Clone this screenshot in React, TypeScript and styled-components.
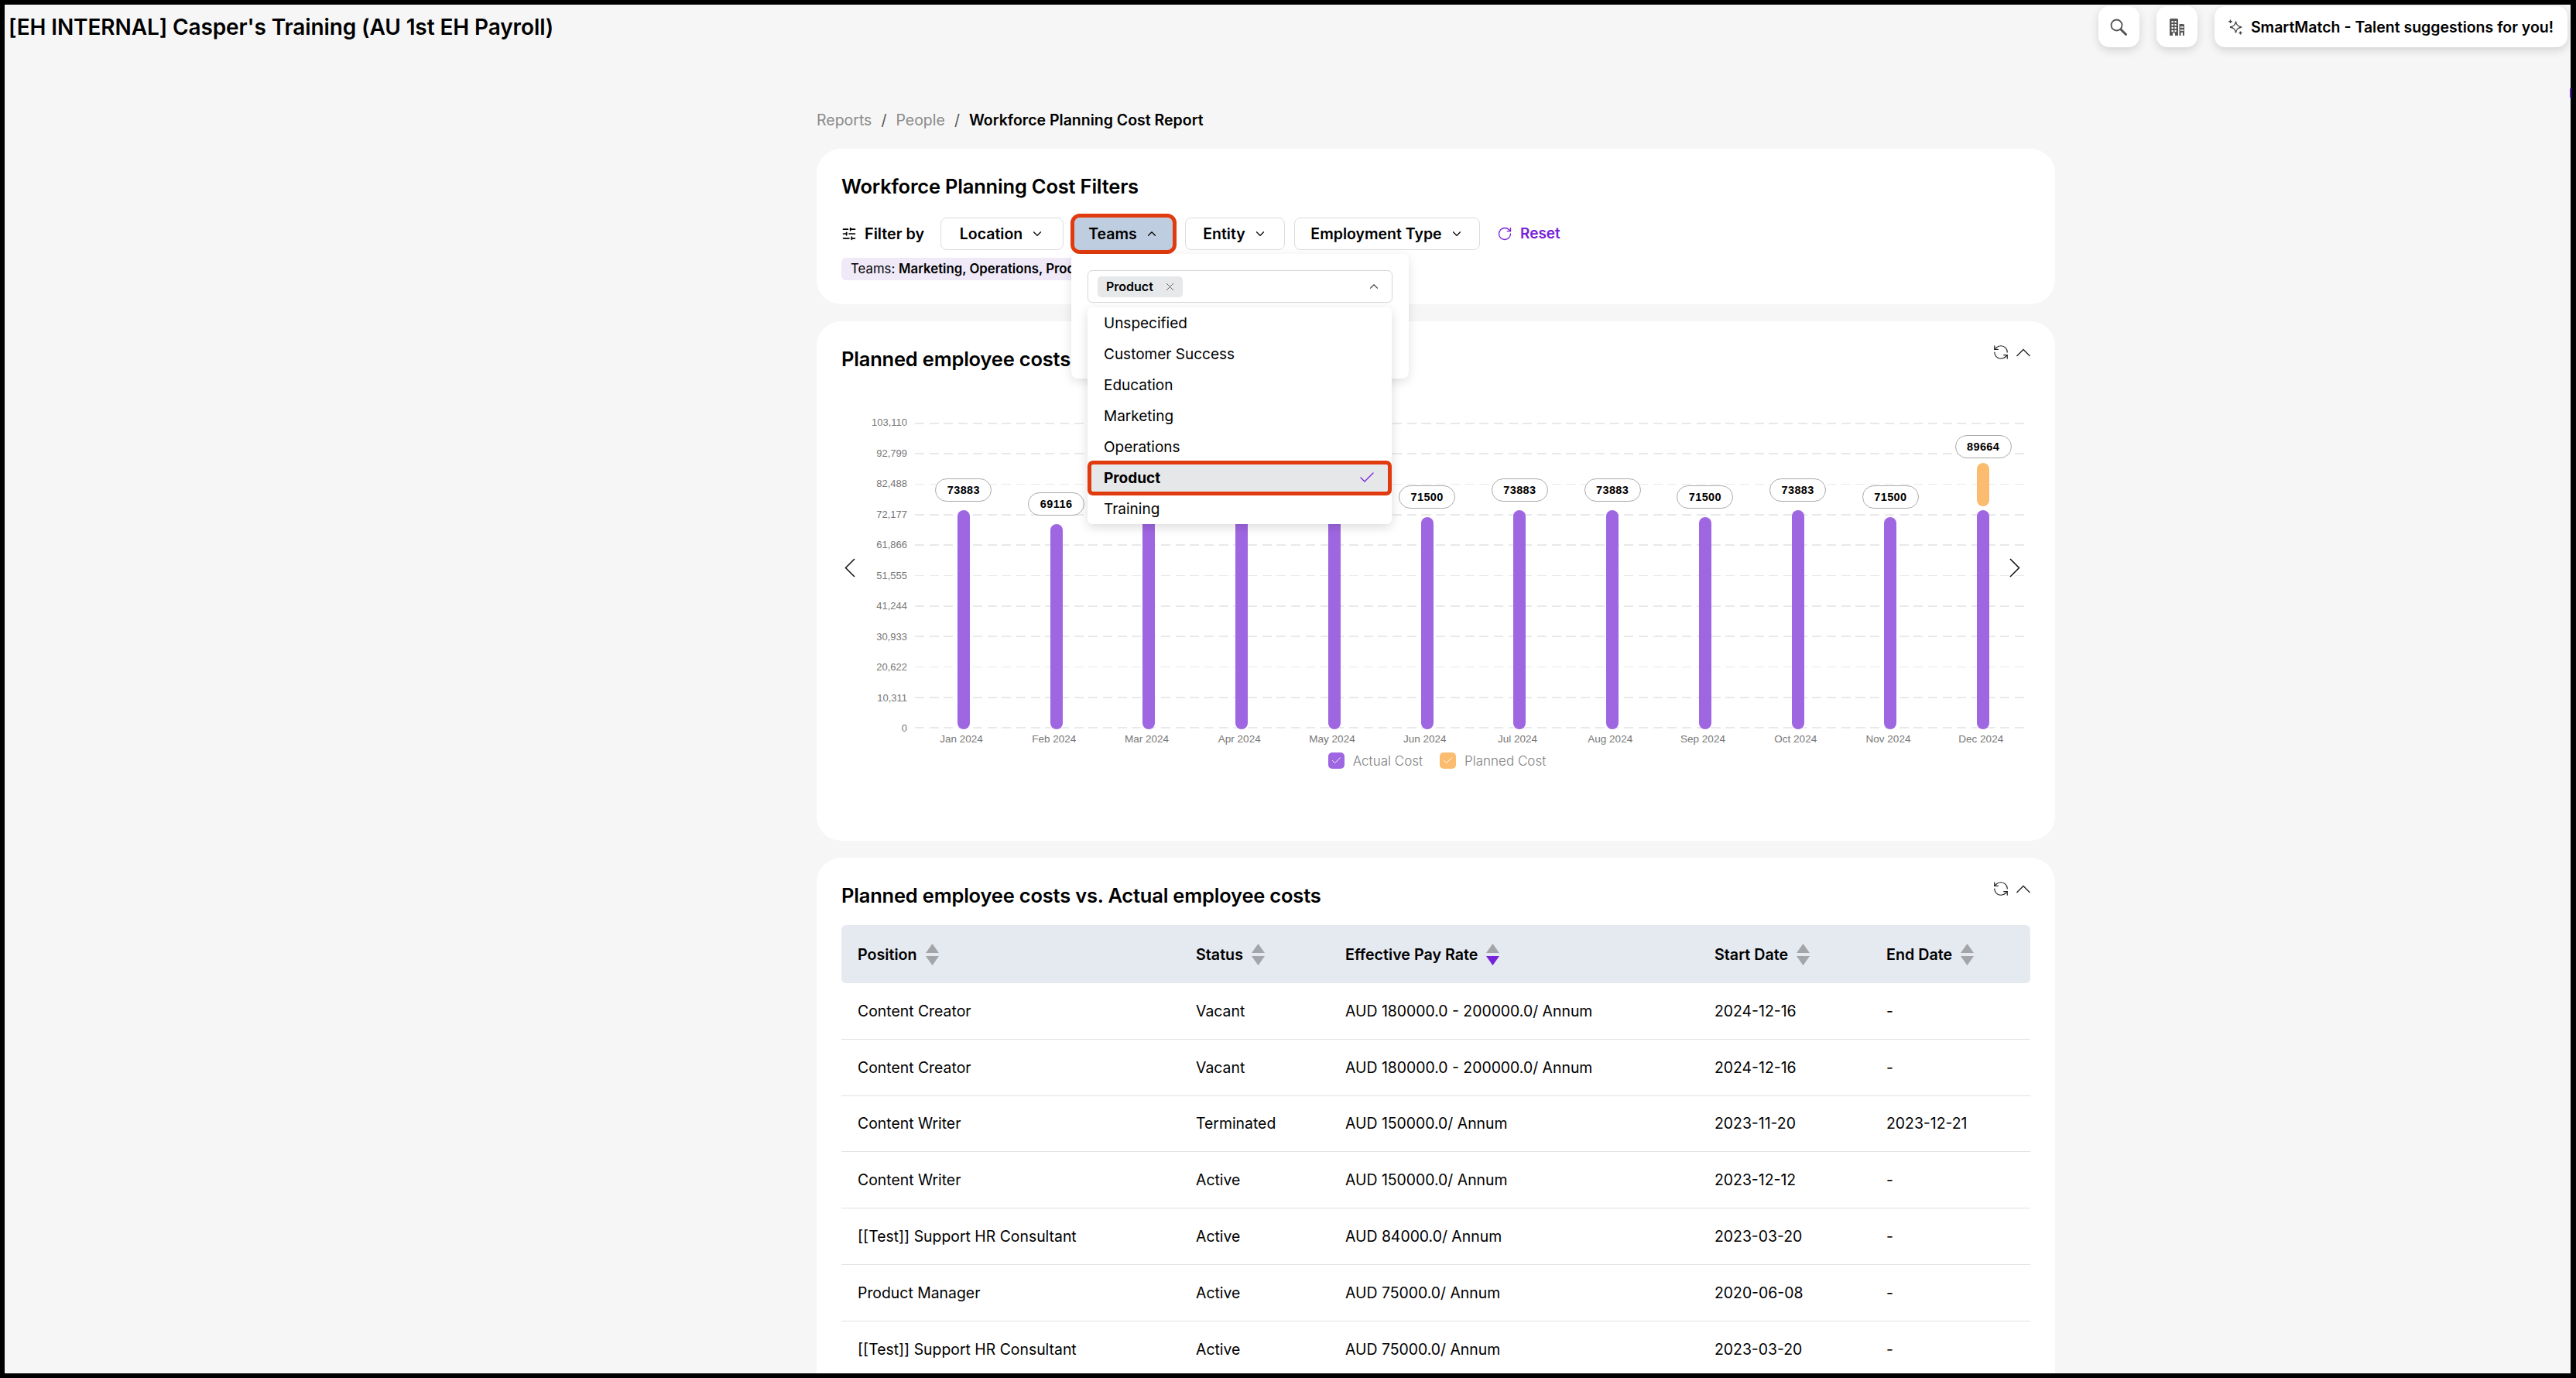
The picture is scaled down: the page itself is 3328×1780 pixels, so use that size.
import styled, { createGlobalStyle } from "styled-components";
import { ChevronDown, ChevronUp, SlidersHorizontal, X, Check, RefreshCcw, RotateCw } from "lucide-react";

const UI_FONT = `Inter, "Noto Sans", sans-serif`;
const CHART_FONT = `"Liberation Sans", Arial, sans-serif`;

const GlobalStyle = createGlobalStyle`
  html, body { margin: 0; padding: 0; background: #000; }
  * { box-sizing: border-box; }
  #root { width: 3328px; height: 1780px; overflow: hidden; }
`;

const Frame = styled.div`
  width: 3328px;
  height: 1780px;
  padding: 6px 7px 6px 6px;
  background: #000;
`;

const Page = styled.div`
  position: relative;
  width: 100%;
  height: 100%;
  background: #f6f6f6;
  font-family: ${UI_FONT};
  color: #000;
`;

const Clip = styled.div`
  width: 100%;
  height: 100%;
  overflow: hidden;
`;

const EdgeTab = styled.span`
  position: absolute;
  top: 107px;
  right: -1px;
  width: 2px;
  height: 14px;
  border-radius: 2px 0 0 2px;
  background: #5a1fb0;
`;

const TopBar = styled.header`
  display: flex;
  justify-content: space-between;
  align-items: flex-start;
  padding: 2px 4px 0 5px;
`;

const AppTitle = styled.h1`
  margin: 11px 0 0;
  font-size: 28px;
  line-height: 32px;
  font-weight: 600;
  letter-spacing: -0.1px;
`;

const TopActions = styled.div`
  display: flex;
  gap: 22px;
`;

const TopButton = styled.button`
  display: flex;
  align-items: center;
  justify-content: center;
  gap: 10px;
  height: 53px;
  min-width: 53px;
  padding: ${(p) => (p.$wide ? "0 18px 0 17px" : "0")};
  border: 0;
  border-radius: 14px;
  background: #fff;
  box-shadow: 0 4px 12px rgba(0, 0, 0, 0.14);
  font-family: ${UI_FONT};
  font-size: 19.5px;
  font-weight: 600;
  color: #000;
  white-space: nowrap;
  svg { color: #555; flex: none; }
`;

const Content = styled.main`
  width: 1600px;
  margin: 0 0 0 1049px;
  padding-top: 79px;
`;

const Breadcrumbs = styled.nav`
  display: flex;
  align-items: center;
  gap: 12px;
  height: 30px;
  font-size: 19.5px;
  color: #8a8a8a;
`;

const CrumbCurrent = styled.span`
  color: #000;
  font-weight: 600;
`;

const CrumbSlash = styled.span`
  color: #555;
`;

const Card = styled.section`
  position: relative;
  margin-top: 22px;
  padding: 32px;
  height: ${(p) => p.$height}px;
  background: #fff;
  border-radius: 32px;
`;

const CardHeader = styled.div`
  display: flex;
  justify-content: space-between;
  align-items: flex-start;
`;

const CardTitle = styled.h2`
  margin: 0;
  font-size: 25.5px;
  line-height: 34px;
  font-weight: 600;
  letter-spacing: -0.2px;
`;

const CardTools = styled.div`
  display: flex;
  align-items: center;
  gap: 9px;
  margin-top: -3px;
  color: #222;
`;

const FilterRow = styled.div`
  display: flex;
  align-items: center;
  height: 51px;
  margin-top: 18px;
`;

const FilterLabel = styled.div`
  display: flex;
  align-items: center;
  gap: 10px;
  width: 128px;
  font-size: 19.8px;
  font-weight: 600;
`;

const FilterButton = styled.button`
  display: flex;
  align-items: center;
  justify-content: center;
  gap: 10px;
  width: ${(p) => p.$w}px;
  height: 42px;
  margin-right: ${(p) => p.$mr}px;
  border: 1px solid #dcdcdc;
  border-radius: 8px;
  background: #fff;
  font-family: ${UI_FONT};
  font-size: 19.5px;
  font-weight: 600;
  color: #000;
`;

const ActiveFilter = styled(FilterButton)`
  background: #bfcde0;
  border: 0;
  outline: 5px solid #e03a0e;
  outline-offset: 0;
  border-radius: 7px;
`;

const ResetLink = styled.span`
  display: flex;
  align-items: center;
  gap: 10px;
  margin-left: 22px;
  font-size: 19px;
  font-weight: 600;
  color: #7622d7;
`;

const AppliedChip = styled.div`
  display: inline-block;
  margin-top: 6px;
  height: 29px;
  padding: 0 12px;
  border-radius: 6px;
  background: #efe9f8;
  font-size: 16.8px;
  line-height: 29px;
  b { font-weight: 600; }
`;

const Popover = styled.div`
  position: absolute;
  left: 329px;
  top: 136px;
  width: 436px;
  height: 161px;
  padding: 21px;
  background: #fff;
  border-radius: 8px;
  box-shadow: 0 4px 14px rgba(0, 0, 0, 0.12);
  z-index: 5;
`;

const SelectBox = styled.div`
  display: flex;
  justify-content: space-between;
  align-items: center;
  height: 42px;
  padding: 0 14px 0 12px;
  border: 1px solid #d6d6d6;
  border-radius: 6px;
  color: #444;
`;

const SelectTag = styled.span`
  display: flex;
  align-items: center;
  justify-content: space-between;
  width: 110px;
  height: 27px;
  padding: 0 8px 0 11px;
  border-radius: 5px;
  background: #e7e8ea;
  font-size: 16px;
  font-weight: 600;
  color: #000;
  svg { color: #666; }
`;

const OptionList = styled.ul`
  position: absolute;
  top: 69px;
  left: 21px;
  width: 393px;
  height: 280px;
  margin: 0;
  padding: 0;
  list-style: none;
  background: #fff;
  border-radius: 6px;
  box-shadow: 0 4px 14px rgba(0, 0, 0, 0.14);
`;

const Option = styled.li`
  display: flex;
  align-items: center;
  justify-content: space-between;
  height: 40px;
  padding: 0 20px 0 21px;
  font-size: 19px;
`;

const SelectedOption = styled(Option)`
  font-weight: 700;
  background: #e6e7e9;
  border: 5px solid #e03a0e;
  border-radius: 7px;
  height: 45px;
  margin: -2.5px 0;
  padding: 0 15px 0 16px;
  svg { color: #7622d7; }
`;

const ChartWrap = styled.div`
  display: flex;
  margin-top: 65px;
`;

const YAxis = styled.div`
  display: flex;
  flex-direction: column;
  justify-content: space-between;
  align-items: flex-end;
  width: 85px;
  height: 395px;
  margin: 0 10px 0 0;
  font-family: ${CHART_FONT};
  font-size: 13px;
  color: #777;
  span { line-height: 0; }
`;

const Plot = styled.div`
  position: relative;
  flex: 1;
  height: 395px;
  margin-right: 1px;
`;

const GridLayer = styled.div`
  position: absolute;
  inset: 0;
  display: flex;
  flex-direction: column;
  justify-content: space-between;
`;

const GridLine = styled.div`
  height: 1.5px;
  background: repeating-linear-gradient(to right, #e9e9e9 0 12px, transparent 12px 18.7px);
`;

const BarRow = styled.div`
  position: absolute;
  inset: 0;
  display: flex;
  padding-left: 3px;
`;

const BarColumn = styled.div`
  position: relative;
  display: flex;
  flex-direction: column;
  justify-content: flex-end;
  align-items: center;
  width: 120px;
  height: 396px;
`;

const ValuePill = styled.span`
  margin-bottom: 6px;
  width: 73px;
  height: 30px;
  border: 1px solid #aaa;
  border-radius: 15px;
  background: #fff;
  font-family: ${CHART_FONT};
  font-size: 14.5px;
  font-weight: 700;
  letter-spacing: 0.4px;
  line-height: 28px;
  text-align: center;
`;

const Bar = styled.div`
  width: 16px;
  border-radius: 8px;
  background: ${(p) => (p.$planned ? "#fbbc6f" : "#9f66e1")};
  margin-top: ${(p) => (p.$planned ? "0" : "5px")};
`;

const MonthLabel = styled.span`
  position: absolute;
  top: 400px;
  left: 0;
  width: 114px;
  font-family: ${CHART_FONT};
  font-size: 13.5px;
  line-height: 18px;
  color: #777;
  text-align: center;
`;

const ArrowButton = styled.span`
  position: absolute;
  top: 306px;
  ${(p) => (p.$side === "left" ? "left: 36px;" : "right: 45px;")}
  color: #111;
  z-index: 2;
  line-height: 0;
`;

const Legend = styled.div`
  display: flex;
  justify-content: center;
  align-items: center;
  gap: 22px;
  margin: 31px 0 0 3px;
  font-size: 17px;
  font-weight: 300;
  color: #7f7f7f;
`;

const LegendItem = styled.span`
  display: flex;
  align-items: center;
  gap: 11px;
`;

const LegendBox = styled.span`
  display: flex;
  align-items: center;
  justify-content: center;
  width: 21px;
  height: 21px;
  border-radius: 5px;
  color: #fff;
  background: ${(p) => p.$color};
`;

const Table = styled.div`
  margin-top: 21px;
  font-size: 19.4px;
`;

const COLUMNS = "437px 193px 477px 222px 206px";

const HeadRow = styled.div`
  display: grid;
  grid-template-columns: ${COLUMNS};
  align-items: center;
  height: 75px;
  background: #e5e9f0;
  border-radius: 6px;
  font-size: 19.7px;
  font-weight: 600;
`;

const HeadCell = styled.div`
  display: flex;
  align-items: center;
  gap: 11px;
  padding-left: 21px;
`;

const SortIcon = styled.span`
  display: flex;
  flex-direction: column;
  gap: 4px;
  width: 17px;
`;

const SortArrow = styled.svg`
  display: block;
  width: 17px;
  height: 12px;
  fill: ${(p) => (p.$active ? "#7622d7" : "#a3a5a9")};
`;

const BodyRow = styled.div`
  display: grid;
  grid-template-columns: ${COLUMNS};
  align-items: center;
  height: 72.8px;
  border-bottom: 1.5px solid #e2e2e2;
`;

const BodyCell = styled.div`
  padding-left: 21px;
`;

const months = ["Jan", "Feb", "Mar", "Apr", "May", "Jun", "Jul", "Aug", "Sep", "Oct", "Nov", "Dec"];
const actual = [73883, 69116, 73883, 73883, 73883, 71500, 73883, 73883, 71500, 73883, 71500, 73883];
const PX_PER_UNIT = 283.5 / 73883;

const rows = [
  ["Content Creator", "Vacant", "AUD 180000.0 - 200000.0/ Annum", "2024-12-16", "-"],
  ["Content Creator", "Vacant", "AUD 180000.0 - 200000.0/ Annum", "2024-12-16", "-"],
  ["Content Writer", "Terminated", "AUD 150000.0/ Annum", "2023-11-20", "2023-12-21"],
  ["Content Writer", "Active", "AUD 150000.0/ Annum", "2023-12-12", "-"],
  ["[[Test]] Support HR Consultant", "Active", "AUD 84000.0/ Annum", "2023-03-20", "-"],
  ["Product Manager", "Active", "AUD 75000.0/ Annum", "2020-06-08", "-"],
  ["[[Test]] Support HR Consultant", "Active", "AUD 75000.0/ Annum", "2023-03-20", "-"],
];

const yLabels = ["103,110", "92,799", "82,488", "72,177", "61,866", "51,555", "41,244", "30,933", "20,622", "10,311", "0"];

function SearchGlyph() {
  return (
    <svg width="22" height="22" viewBox="0 0 22 22" fill="none" stroke="currentColor">
      <circle cx="8.5" cy="8.5" r="7" strokeWidth="1.8" />
      <path d="M14 14 L20.5 20.5" strokeWidth="3" strokeLinecap="round" />
    </svg>
  );
}

function BuildingGlyph() {
  return (
    <svg width="19" height="22" viewBox="0 0 19 22">
      <path fill="currentColor" d="M0 1.5 Q0 0 1.5 0 H9.5 Q11 0 11 1.5 V22 H0 Z M12.5 7 H17.5 Q19 7 19 8.5 V22 H12.5 Z" />
      <g fill="#fff">
        {[3, 7, 11, 15].map((y) => (
          <g key={y}>
            <rect x="2.5" y={y} width="2.2" height="2.2" />
            <rect x="6.4" y={y} width="2.2" height="2.2" />
          </g>
        ))}
        {[10, 14].map((y) => (
          <g key={y}>
            <rect x="14" y={y} width="1.6" height="2" />
            <rect x="16.2" y={y} width="1.6" height="2" />
          </g>
        ))}
        <rect x="4" y="18.5" width="3" height="3.5" />
        <rect x="14.6" y="18" width="2.4" height="4" />
      </g>
    </svg>
  );
}

function SparkleGlyph() {
  return (
    <svg width="20" height="20" viewBox="0 0 20 20" fill="none" stroke="#444" strokeWidth="1.3">
      <path d="M10.5 2.5 C11.2 7.2 12.9 9 18 10 C12.9 11 11.2 12.8 10.5 17.5 C9.8 12.8 8.1 11 3 10 C8.1 9 9.8 7.2 10.5 2.5 Z" />
      <path d="M3.5 0.5 V5 M1.2 2.7 H5.8 M16.5 15.5 V19.5 M14.5 17.5 H18.5" strokeWidth="1.4" />
    </svg>
  );
}

function PagerArrow({ side }: { side: "left" | "right" }) {
  return (
    <ArrowButton $side={side}>
      <svg width="14" height="25" viewBox="0 0 14 25" fill="none" stroke="currentColor" strokeWidth="1.5">
        <path d={side === "left" ? "M13 1 L1.5 12.5 L13 24" : "M1 1 L12.5 12.5 L1 24"} />
      </svg>
    </ArrowButton>
  );
}

function Sort({ active }: { active?: boolean }) {
  return (
    <SortIcon>
      <SortArrow viewBox="0 0 17 12"><path d="M8.5 0 L17 12 H0 Z" /></SortArrow>
      <SortArrow viewBox="0 0 17 12" $active={active}><path d="M0 0 H17 L8.5 12 Z" /></SortArrow>
    </SortIcon>
  );
}

function Tools() {
  return (
    <CardTools>
      <RefreshCcw size={22} strokeWidth={1.3} />
      <svg width="18" height="11" viewBox="0 0 18 11" fill="none" stroke="currentColor" strokeWidth="1.3">
        <path d="M0.5 10 L9 1.5 L17.5 10" />
      </svg>
    </CardTools>
  );
}

export default function App() {
  return (
    <Frame>
      <GlobalStyle />
      <Page>
        <EdgeTab />
        <Clip>
          <TopBar>
            <AppTitle>[EH INTERNAL] Casper's Training (AU 1st EH Payroll)</AppTitle>
            <TopActions>
              <TopButton><SearchGlyph /></TopButton>
              <TopButton><BuildingGlyph /></TopButton>
              <TopButton $wide><SparkleGlyph />SmartMatch - Talent suggestions for you!</TopButton>
            </TopActions>
          </TopBar>

          <Content>
            <Breadcrumbs>
              <span>Reports</span>
              <CrumbSlash>/</CrumbSlash>
              <span>People</span>
              <CrumbSlash>/</CrumbSlash>
              <CrumbCurrent>Workforce Planning Cost Report</CrumbCurrent>
            </Breadcrumbs>

            <Card $height={201}>
              <CardTitle>Workforce Planning Cost Filters</CardTitle>
              <FilterRow>
                <FilterLabel><SlidersHorizontal size={20} strokeWidth={2} />Filter by</FilterLabel>
                <FilterButton $w={159} $mr={14}>Location <ChevronDown size={18} strokeWidth={1.6} /></FilterButton>
                <ActiveFilter $w={127} $mr={16}>Teams <ChevronUp size={18} strokeWidth={1.6} /></ActiveFilter>
                <FilterButton $w={129} $mr={12}>Entity <ChevronDown size={18} strokeWidth={1.6} /></FilterButton>
                <FilterButton $w={240} $mr={0}>Employment Type <ChevronDown size={18} strokeWidth={1.6} /></FilterButton>
                <ResetLink><RotateCw size={20} strokeWidth={1.6} />Reset</ResetLink>
              </FilterRow>
              <AppliedChip>Teams: <b>Marketing, Operations, Product</b></AppliedChip>
              <Popover>
                <SelectBox>
                  <SelectTag>Product <X size={17} strokeWidth={1.4} /></SelectTag>
                  <ChevronUp size={18} strokeWidth={1.5} />
                </SelectBox>
                <OptionList>
                  <Option>Unspecified</Option>
                  <Option>Customer Success</Option>
                  <Option>Education</Option>
                  <Option>Marketing</Option>
                  <Option>Operations</Option>
                  <SelectedOption>Product <Check size={24} strokeWidth={1.3} /></SelectedOption>
                  <Option>Training</Option>
                </OptionList>
              </Popover>
            </Card>

            <Card $height={671}>
              <CardHeader>
                <CardTitle>Planned employee costs vs. Actual employee costs</CardTitle>
                <Tools />
              </CardHeader>
              <PagerArrow side="left" />
              <PagerArrow side="right" />
              <ChartWrap>
                <YAxis>{yLabels.map((l) => <span key={l}>{l}</span>)}</YAxis>
                <Plot>
                  <GridLayer>{yLabels.map((l) => <GridLine key={l} />)}</GridLayer>
                  <BarRow>
                    {months.map((m, i) => (
                      <BarColumn key={m}>
                        <ValuePill>{i === 11 ? 89664 : actual[i]}</ValuePill>
                        {i === 11 && <Bar $planned style={{ height: 56 }} />}
                        <Bar style={{ height: actual[i] * PX_PER_UNIT }} />
                        <MonthLabel>{m} 2024</MonthLabel>
                      </BarColumn>
                    ))}
                  </BarRow>
                </Plot>
              </ChartWrap>
              <Legend>
                <LegendItem><LegendBox $color="#9f66e1"><Check size={15} strokeWidth={1.5} /></LegendBox>Actual Cost</LegendItem>
                <LegendItem><LegendBox $color="#fbbc6f"><Check size={15} strokeWidth={1.5} /></LegendBox>Planned Cost</LegendItem>
              </Legend>
            </Card>

            <Card $height={760}>
              <CardHeader>
                <CardTitle>Planned employee costs vs. Actual employee costs</CardTitle>
                <Tools />
              </CardHeader>
              <Table>
                <HeadRow>
                  <HeadCell>Position <Sort /></HeadCell>
                  <HeadCell>Status <Sort /></HeadCell>
                  <HeadCell>Effective Pay Rate <Sort active /></HeadCell>
                  <HeadCell>Start Date <Sort /></HeadCell>
                  <HeadCell>End Date <Sort /></HeadCell>
                </HeadRow>
                {rows.map((r, i) => (
                  <BodyRow key={i}>
                    {r.map((c, j) => <BodyCell key={j}>{c}</BodyCell>)}
                  </BodyRow>
                ))}
              </Table>
            </Card>
          </Content>
        </Clip>
      </Page>
    </Frame>
  );
}
